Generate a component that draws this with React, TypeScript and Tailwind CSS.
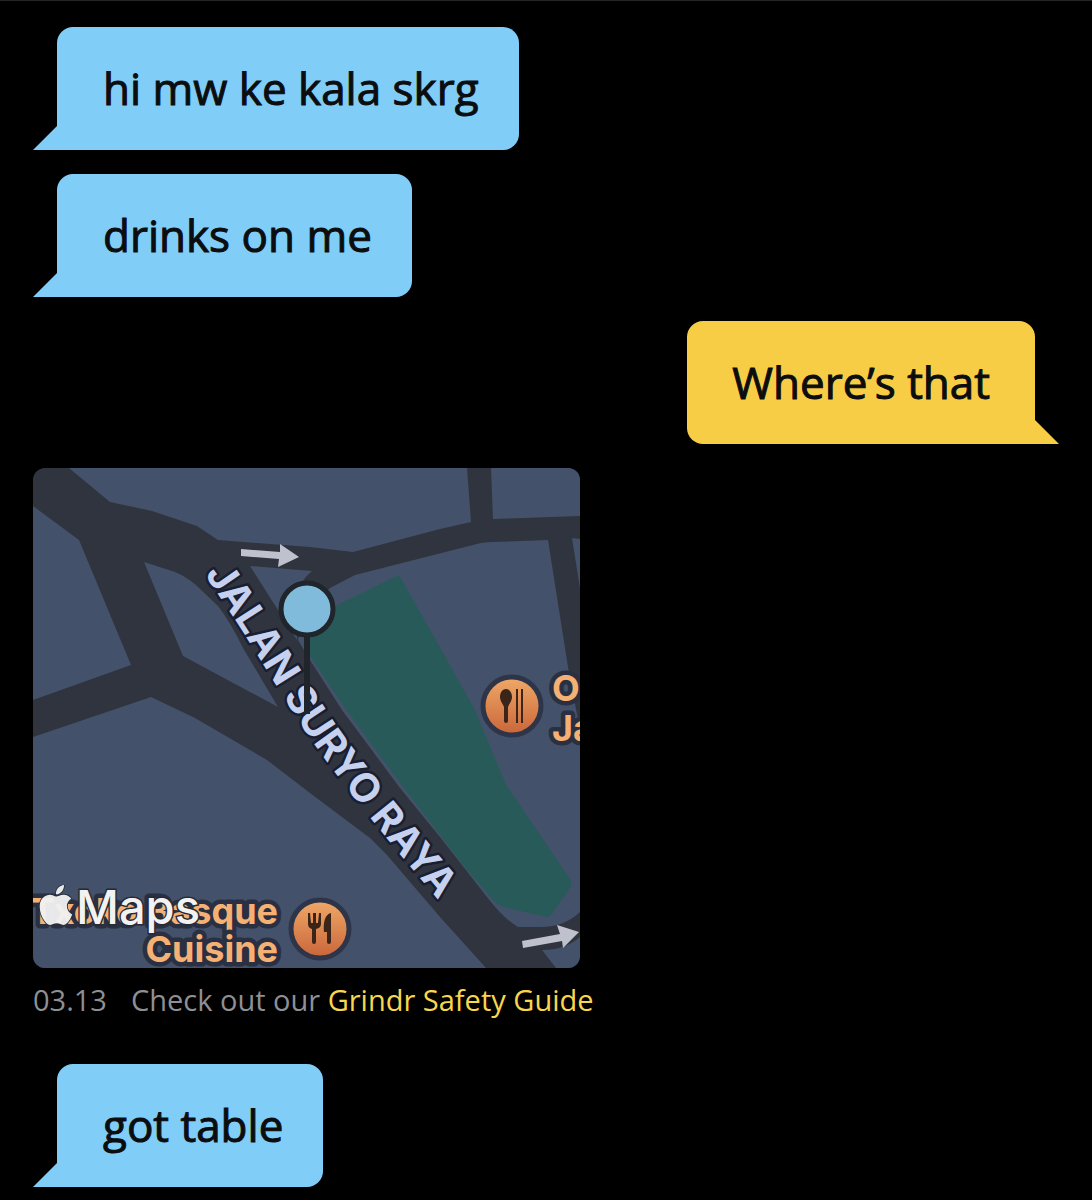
import React from 'react';
import { SiApple } from 'react-icons/si';

type Side = 'in' | 'out';

const Tail: React.FC<{ side: Side }> = ({ side }) => (
  <svg viewBox="0 0 24 24" className={`w-6 h-6 shrink-0 ${side === 'in' ? 'fill-[#80cdf8]' : 'fill-[#f8cd46]'}`}>
    <path d={side === 'in' ? 'M24 0V24H0Z' : 'M0 0V24H24Z'} />
  </svg>
);

const Bubble: React.FC<{ side: Side; children: React.ReactNode }> = ({ side, children }) => (
  <div className={`flex items-end ${side === 'in' ? 'justify-start' : 'justify-end'}`}>
    {side === 'in' && <Tail side={side} />}
    <p
      className={`py-8 text-[44px] leading-[59px] font-medium text-[#0b0d0f] [-webkit-text-stroke:1px_#0b0d0f] rounded-t-2xl ${
        side === 'in' ? 'pl-[46px] pr-10 bg-[#80cdf8] rounded-br-2xl' : 'px-[45px] bg-[#f8cd46] rounded-bl-2xl'
      }`}
    >
      {children}
    </p>
    {side === 'out' && <Tail side={side} />}
  </div>
);

const BLOCKS = [
  'M36 0 77 34 119 43 164 58 185 72 277 79 320 84 407 61 438 54 434 0Z',
  'M458 0 460 51 547 48V0Z',
  'M0 38 46 72 98 197 0 232Z',
  'M111 94 142 104Q154 109 164 118L185 138Q198 155 210 180L245 239 150 188Z',
  'M217 98 279 103Q268 112 264 125L264 172Z',
  'M297 120 322 107 440 77Q449 74 460 74L515 72 535 199 547 262V444Q530 460 505 459L485 459Q470 450 454 429L407 369 367 320 309 242 277 192 265 172 272 145Z',
  'M539 70 547 71V120Z',
  'M0 269 118 229 162 250 234 292 277 325 337 370 354 387 407 449 453 500H0Z',
  'M509 482Q532 482 547 469V500H523Z',
];

const LocationMap: React.FC = () => (
  <svg viewBox="0 0 547 500" role="img" aria-label="Map" className="block w-[547px] max-w-full rounded-xl bg-[#30343e] font-['Inter',sans-serif]">
    <defs>
      <linearGradient id="poi" x1="0" y1="0" x2="0" y2="1">
        <stop offset="0" stopColor="#f0a967" />
        <stop offset="1" stopColor="#c9653a" />
      </linearGradient>
      <path id="street" d="M171 106C214 167 239 212 269 258S345 361 434 466" />
    </defs>

    <g fill="#43526a">
      {BLOCKS.map(d => <path key={d} d={d} />)}
    </g>
    <path fill="#285a59" d="M366 107 304 137 274 155 277 188 312 240 367 315 434 402 462 434Q466 438 470 439L514 449Q517 449 520 445L538 418Q539 414 537 411L474 318Q470 310 466 300L442 242 400 167Z" />

    {/* one-way arrows */}
    <g fill="#bfc2cc">
      <path d="M208 81V88L246 91 245 99 266 89 247 76V84Z" />
      <path d="M489 473 490 480 529 473 530 480 546 464 524 457 527 466Z" />
    </g>

    <text className="fill-[#c5d1ee] stroke-[#191e30] stroke-[5px] [paint-order:stroke] [stroke-linejoin:round] text-[40px] font-bold">
      <textPath href="#street">JALAN SURYO RAYA</textPath>
    </text>

    {/* pin */}
    <path d="M274 165V246" stroke="#20242b" strokeWidth="6" />
    <circle cx="274" cy="141" r="26" fill="#81bbdc" stroke="#20242b" strokeWidth="5" />

    {/* places */}
    <g className="fill-[#f5b074] text-[36px] font-bold stroke-[#2a3042] stroke-[9px] [paint-order:stroke] [stroke-linejoin:round]">
      <text x="245" y="456" textAnchor="end">Txoko Basque</text>
      <text x="245" y="494" textAnchor="end">Cuisine</text>
      <text x="519" y="233">O</text>
      <text x="519" y="273">Ja</text>
    </g>
    <circle cx="479" cy="238" r="29" fill="url(#poi)" stroke="#2e3549" strokeWidth="5" />
    <g fill="#3b2418">
      <path d="M473 221C477 221 479 225 479 229 479 233 476 236 475 239L475 253Q475 255 473 255T471 253L471 239C470 236 467 233 467 229 467 225 469 221 473 221Z" />
      <path d="M483 221H485V255H483ZM488 221H490V255H488Z" />
    </g>
    <circle cx="287" cy="461" r="29" fill="url(#poi)" stroke="#2e3549" strokeWidth="5" />
    <g fill="#3b2418">
      <path d="M275 445H277L278 455H280L280 445H283L283 455H285L286 445H288L288 456Q288 460 283 461V474Q283 476 281 476T279 474V461Q275 460 275 456Z" />
      <path d="M298 446V474Q298 476 296 476T294 474V464H291C290 455 292 446 298 445Z" />
    </g>

    {/* attribution */}
    <SiApple x="3" y="417" size={40} color="#f2f2f2" stroke="#262a35" strokeWidth="1" opacity="0.95" className="[paint-order:stroke]" />
    <text x="43" y="456" className="fill-[#f2f2f2] stroke-[#262a35] stroke-[3px] [paint-order:stroke] text-[47px] font-medium">Maps</text>
  </svg>
);

const App: React.FC = () => (
  <main className="min-h-screen bg-black border-t border-[#242626] px-[33px] pt-[26px] font-['Open_Sans',sans-serif]">
    <div className="flex flex-col gap-6">
      <Bubble side="in">hi mw ke kala skrg</Bubble>
      <Bubble side="in">drinks on me</Bubble>
      <Bubble side="out">Where’s that</Bubble>
      <div>
        <LocationMap />
        <p className="mt-3 text-[29px] leading-10 text-[#8f8f94]">
          <time className="mr-6">03.13</time>
          Check out our <a href="#safety" className="text-[#f8d64e]">Grindr Safety Guide</a>
        </p>
      </div>
      <div className="pt-5">
        <Bubble side="in">got table</Bubble>
      </div>
    </div>
  </main>
);

export default App;
